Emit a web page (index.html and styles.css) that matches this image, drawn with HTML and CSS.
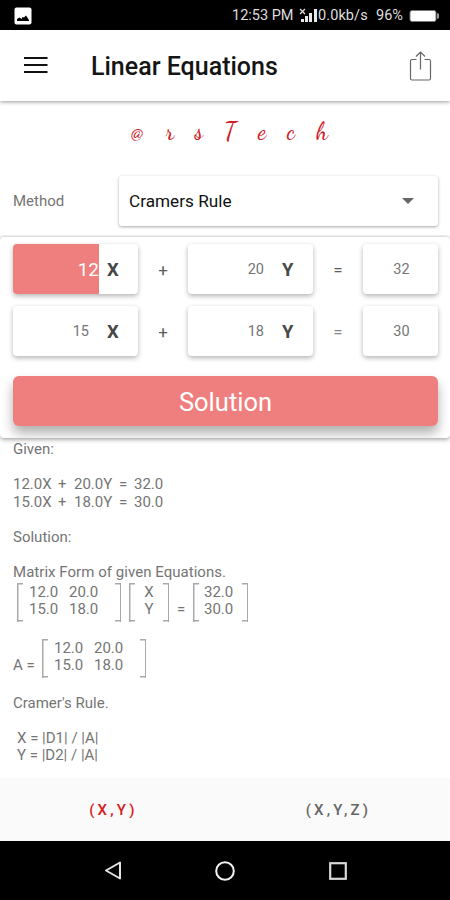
FILE: index.html
```html
<!DOCTYPE html>
<html lang="en">
<head>
<meta charset="utf-8">
<title>Linear Equations</title>
<link rel="stylesheet" href="styles.css">
</head>
<body>
<div class="status">
  <svg class="pic" width="18" height="18" viewBox="0 0 18 18"><rect x=".5" y=".5" width="17" height="17" rx="2" fill="#fff"/><path d="M3 14v-2l2.500-1.500 2 1.500 1-2 1.500.5 2-2 3 4.500v1z" fill="#000"/></svg>
  <span class="clock">12:53 PM</span>
  <svg class="signal" width="19" height="16" viewBox="0 0 19 16"><path d="M1 1l5 5M6 1l-5 5" stroke="#ddd" stroke-width="1.300"/><path d="M2 11h3v3H2zM6 8h3v6H6zM10 5h3v9h-3zM15 1h3v13h-3z" fill="#e8e8e8"/></svg>
  <span class="speed">0.0kb/s</span>
  <span class="percent">96%</span>
  <svg class="battery" width="31" height="14" viewBox="0 0 31 14"><rect x="1" y="1.500" width="26" height="11" rx="2" fill="#fff" stroke="#777"/><path d="M28 4l2 1v4l-2 1z" fill="#999"/></svg>
</div>
<header class="appbar">
  <svg class="menu" width="24" height="18" viewBox="0 0 24 18"><path d="M0 2h23.500M0 9h23.500M0 16h23.500" stroke="#111" stroke-width="2"/></svg>
  <h1>Linear Equations</h1>
  <svg class="share" width="24" height="32" viewBox="0 0 24 32" fill="none" stroke="#666" stroke-width="1.200"><path d="M7.500 9.500H3Q1.500 9.500 1.500 11v17.500q0 1.500 1.500 1.500h17q1.500 0 1.500-1.500V11q0-1.500-1.500-1.500h-4.500"/><path d="M11.500 19.500V2M7 6.500L11.500 2 16 6.500"/></svg>
</header>
<main>
  <div class="brand"><span>@</span><span>r</span><span>s</span><span>T</span><span>e</span><span>c</span><span>h</span></div>
  <div class="method">
    <span class="label">Method</span>
    <div class="select"><span>Cramers Rule</span><svg width="12" height="6" viewBox="0 0 12 6"><path d="M0 0h12L6 6z" fill="#666"/></svg></div>
  </div>
  <section class="panel">
    <div class="row">
      <div class="cell focus"><span class="num">12</span><b>X</b></div><i>+</i>
      <div class="cell"><span class="num">20</span><b>Y</b></div><i>=</i>
      <div class="cell result">32</div>
    </div>
    <div class="row">
      <div class="cell"><span class="num">15</span><b>X</b></div><i>+</i>
      <div class="cell"><span class="num">18</span><b>Y</b></div><i class="pale">=</i>
      <div class="cell result">30</div>
    </div>
    <button class="solve">Solution</button>
  </section>
  <section class="work">
    <p>Given:</p>
    <p class="gap eq"><span>12.0X</span><span>+</span><span>20.0Y</span><span>=</span><span>32.0</span></p>
    <p class="eq"><span>15.0X</span><span>+</span><span>18.0Y</span><span>=</span><span>30.0</span></p>
    <p class="gap">Solution:</p>
    <p class="gap form">Matrix Form of given Equations.</p>
    <div class="matrices">
      <div class="matrix wide"><span>12.0</span><span>20.0</span><span>15.0</span><span>18.0</span></div>
      <div class="matrix vars"><span>X</span><span>Y</span></div>
      <span class="equals">=</span>
      <div class="matrix consts"><span>32.0</span><span>30.0</span></div>
    </div>
    <div class="matrices second">
      <span class="name">A =</span>
      <div class="matrix wide"><span>12.0</span><span>20.0</span><span>15.0</span><span>18.0</span></div>
    </div>
    <p class="rule">Cramer's Rule.</p>
    <p class="gap inset">X = |D1| / |A|</p>
    <p class="inset">Y = |D2| / |A|</p>
  </section>
</main>
<nav class="tabs"><span class="tab active">(X,Y)</span><span class="tab">(X,Y,Z)</span></nav>
<footer class="navbar">
  <svg width="20" height="22" viewBox="0 0 20 22"><path d="M17 2.500v16L3 10.500z" fill="none" stroke="#e4e4e4" stroke-width="2" stroke-linejoin="round"/></svg>
  <svg width="22" height="22" viewBox="0 0 22 22"><circle cx="11" cy="11" r="8.800" fill="none" stroke="#f4f4f4" stroke-width="2"/></svg>
  <svg width="20" height="20" viewBox="0 0 20 20"><rect x="2.200" y="2.200" width="15.600" height="15.600" fill="none" stroke="#d8d8d8" stroke-width="2.200"/></svg>
</footer>
</body>
</html>
```
FILE: styles.css
```css
* { box-sizing: border-box; }
body { margin: 0; width: 450px; height: 900px; overflow: hidden; display: flex; flex-direction: column; background: #fff; font-family: Roboto, "Liberation Sans", sans-serif; color: #757575; }
p, h1 { margin: 0; }
svg { flex: none; display: block; }
.status { height: 30px; flex: none; background: #000; color: #dedede; display: flex; align-items: center; padding: 1px 9px 0 14px; font-size: 14.5px; white-space: nowrap; }
.clock { margin-left: 200px; width: 67px; }
.speed { width: 58px; letter-spacing: .1px; }
.percent { width: 33px; }
.appbar { height: 71px; flex: none; display: flex; align-items: center; padding: 0 17px 0 24px; background: #fff; box-shadow: 0 1px 4px rgba(0,0,0,.4); z-index: 1; }
.menu { margin-bottom: 2px; }
.appbar h1 { margin: 3px 0 0 43px; font-size: 25px; line-height: 30px; font-weight: 500; color: #151515; flex: 1; white-space: nowrap; }
main { flex: 1; min-height: 0; display: flex; flex-direction: column; }
.brand { height: 75px; flex: none; padding: 17px 0 0 121px; display: grid; grid-template-columns: 33px 32px 26px 36px 28px 30px 32px; text-align: center; font: 500 24px/28px "Dancing Script", "Liberation Serif", serif; color: #cf2027; }
.brand span:first-child { font-size: 21px; }
.method { height: 50px; flex: none; display: flex; align-items: center; padding: 0 12px 0 13px; font-size: 15px; }
.label { width: 106px; }
.select { flex: 1; height: 50px; display: flex; align-items: center; justify-content: space-between; padding: 0 24px 0 10px; border-radius: 3px; background: #fff; box-shadow: 0 1px 3px rgba(0,0,0,.35); color: #111; font-size: 17.2px; }
.panel { height: 201px; flex: none; margin-top: 11px; padding: 7px 12px 0 13px; border-radius: 4px; box-shadow: 0 1px 5px rgba(0,0,0,.45); background: #fff; overflow: hidden; z-index: 1; clip-path: inset(-2px 0 -8px 0); }
.row { display: grid; grid-template-columns: 125px 50px 125px 50px 75px; height: 50px; margin-bottom: 12px; }
.cell { border-radius: 4px; background: #fff; box-shadow: 0 2px 5px rgba(0,0,0,.3); display: grid; grid-template-columns: 86px 39px; align-items: center; font-size: 14.5px; overflow: hidden; line-height: 18px; padding-top: 1px; }
.row i { align-self: center; text-align: center; font-style: normal; font-size: 17px; color: #606060; padding-top: 2px; }
.row .pale { color: #888; }
.num { text-align: right; padding-right: 10px; }
.cell b { font-size: 18.5px; color: #484848; padding: 1px 0 0 8px; font-weight: 700; }
.focus { padding-top: 0; }
.focus .num { height: 50px; line-height: 52px; background: #ef7e7e; color: #fff; font-size: 19px; padding-right: 0; }
.focus b { padding-top: 2px; }
.result { display: flex; justify-content: center; padding-left: 2px; }
.solve { display: block; width: 425px; height: 50px; margin-top: 20px; border: 0; border-radius: 6px; padding: 2px 0 0; background: #ef7f7e; color: #fff; font: 25.5px/48px Roboto, sans-serif; box-shadow: 0 7px 12px rgba(0,0,0,.32); }
.panel .row + .row { margin-bottom: 0; }
.work { padding: 3.200px 13px 0; font-size: 15px; line-height: 17.500px; white-space: nowrap; }
.gap { margin-top: 17.500px; }
.eq { display: grid; grid-template-columns: 45px 16px 45px 15px 40px; }
.form { letter-spacing: .04px; }
.matrices { display: flex; height: 42px; padding: 1.500px 0 0 4px; }
.matrix { height: 39px; display: grid; grid-template-rows: 17.500px 17.500px; padding: 1px 0 0; background: linear-gradient(#aaa,#aaa) 0 0/1.500px 100%, linear-gradient(#aaa,#aaa) 100% 0/1.500px 100%, linear-gradient(#aaa,#aaa) 0 0/6px 1.500px, linear-gradient(#aaa,#aaa) 0 100%/6px 1.500px, linear-gradient(#aaa,#aaa) 100% 0/6px 1.500px, linear-gradient(#aaa,#aaa) 100% 100%/6px 1.500px; background-repeat: no-repeat; }
.wide { width: 104px; grid-template-columns: 40px 40px; padding-left: 12px; }
.vars { width: 40px; margin-left: 8px; text-align: center; }
.equals { width: 24px; text-align: center; padding-top: 18px; }
.consts { width: 55px; padding-left: 11px; }
.second { margin-top: 14px; height: 41px; padding-left: 0; }
.name { width: 29px; padding-top: 18px; font-size: 15px; }
.rule { margin-top: 16.500px; }
.inset { padding-left: 4px; }
.tabs { height: 63px; flex: none; display: grid; grid-template-columns: 1fr 1fr; background: #fafafa; }
.tab { text-align: center; font-size: 15px; line-height: 64px; letter-spacing: 3.2px; padding-left: 2px; font-weight: 500; color: #666; }
.active { color: #d71920; border-bottom: 3px solid #d9272c; }
.navbar { height: 59px; flex: none; background: #000; display: grid; grid-template-columns: repeat(3,112.500px); justify-content: center; justify-items: center; align-items: center; }
```
